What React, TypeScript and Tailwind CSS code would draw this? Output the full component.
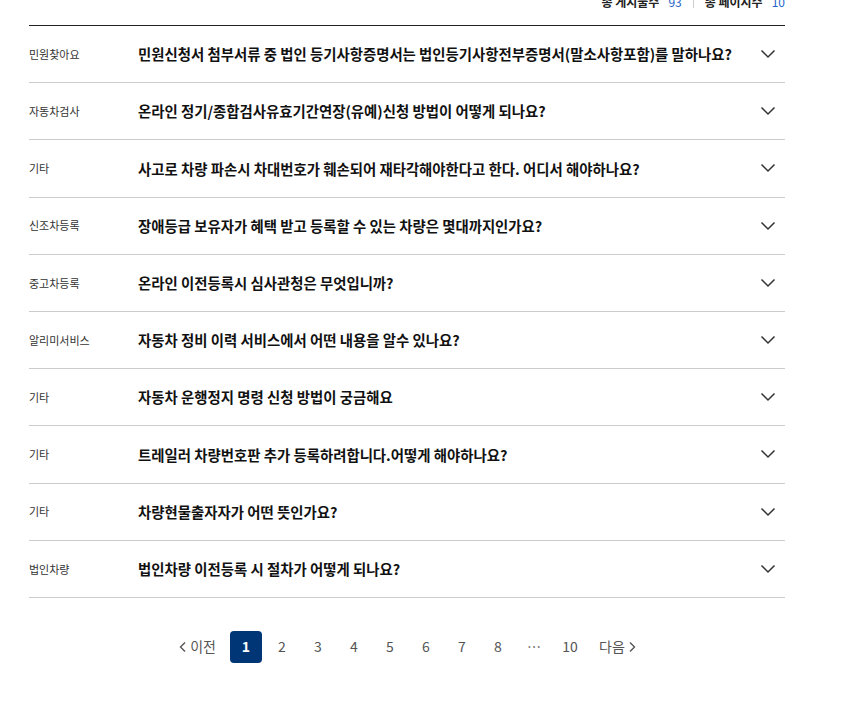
import React from "react";

const rows: [string, string][] = [
  ["민원찾아요", "민원신청서 첨부서류 중 법인 등기사항증명서는 법인등기사항전부증명서(말소사항포함)를 말하나요?"],
  ["자동차검사", "온라인 정기/종합검사유효기간연장(유예)신청 방법이 어떻게 되나요?"],
  ["기타", "사고로 차량 파손시 차대번호가 훼손되어 재타각해야한다고 한다. 어디서 해야하나요?"],
  ["신조차등록", "장애등급 보유자가 혜택 받고 등록할 수 있는 차량은 몇대까지인가요?"],
  ["중고차등록", "온라인 이전등록시 심사관청은 무엇입니까?"],
  ["알리미서비스", "자동차 정비 이력 서비스에서 어떤 내용을 알수 있나요?"],
  ["기타", "자동차 운행정지 명령 신청 방법이 궁금해요"],
  ["기타", "트레일러 차량번호판 추가 등록하려합니다.어떻게 해야하나요?"],
  ["기타", "차량현물출자자가 어떤 뜻인가요?"],
  ["법인차량", "법인차량 이전등록 시 절차가 어떻게 되나요?"],
];

const Chevron = () => (
  <svg width="16" height="10" viewBox="0 0 16 10" fill="none">
    <path d="M1.5 1.5 L8 8 L14.5 1.5" stroke="#333" strokeWidth="1.5" />
  </svg>
);

export default function App() {
  return (
    <div
      className="w-[865px] h-[715px] bg-white overflow-hidden"
      style={{ fontFamily: '"Noto Sans CJK KR", "Noto Sans", sans-serif' }}
    >
      <div className="ml-[29px] w-[756px]">
        <div className="mt-[-8px] h-[20px] flex items-center justify-end text-[12px] leading-[20px] mb-[13px]">
          <span className="font-bold text-[#222]">총 게시물수</span>
          <span className="ml-[9px] text-[#2563c9]">93</span>
          <span className="mx-[11px] w-px h-[12px] bg-[#ccc]" />
          <span className="font-bold text-[#222]">총 페이지수</span>
          <span className="ml-[9px] text-[#2563c9]">10</span>
        </div>
        <div className="border-t border-[#222]">
          {rows.map(([cat, title], i) => (
            <div
              key={i}
              className="h-[57.2px] flex items-center border-b border-[#ccc]"
            >
              <div className="w-[109px] shrink-0 text-[11px] text-[#333]">{cat}</div>
              <div className="flex-1 text-[14.4px] font-bold text-[#111]">{title}</div>
              <div className="w-[40px] flex justify-center pl-[5px]">
                <Chevron />
              </div>
            </div>
          ))}
        </div>
        <div className="mt-[33px] flex items-center justify-center text-[14px] text-[#555]">
          <button className="flex items-center gap-[3px] h-[32px] px-[1px] mr-[13px]">
            <svg width="8" height="12" viewBox="0 0 8 12" fill="none">
              <path d="M6 1.5 L1.5 6 L6 10.5" stroke="#555" strokeWidth="1.4" />
            </svg>
            <span>이전</span>
          </button>
          <div className="flex items-center gap-[4px]">
            <span className="w-[32px] h-[32px] rounded-[4px] bg-[#003675] text-white font-bold flex items-center justify-center">1</span>
            {["2", "3", "4", "5", "6", "7", "8", "…", "10"].map((p, i) => (
              <span key={i} className="w-[32px] h-[32px] flex items-center justify-center">{p}</span>
            ))}
          </div>
          <button className="flex items-center gap-[3px] h-[32px] ml-[13px]">
            <span>다음</span>
            <svg width="8" height="12" viewBox="0 0 8 12" fill="none">
              <path d="M2 1.5 L6.5 6 L2 10.5" stroke="#555" strokeWidth="1.4" />
            </svg>
          </button>
        </div>
      </div>
    </div>
  );
}
